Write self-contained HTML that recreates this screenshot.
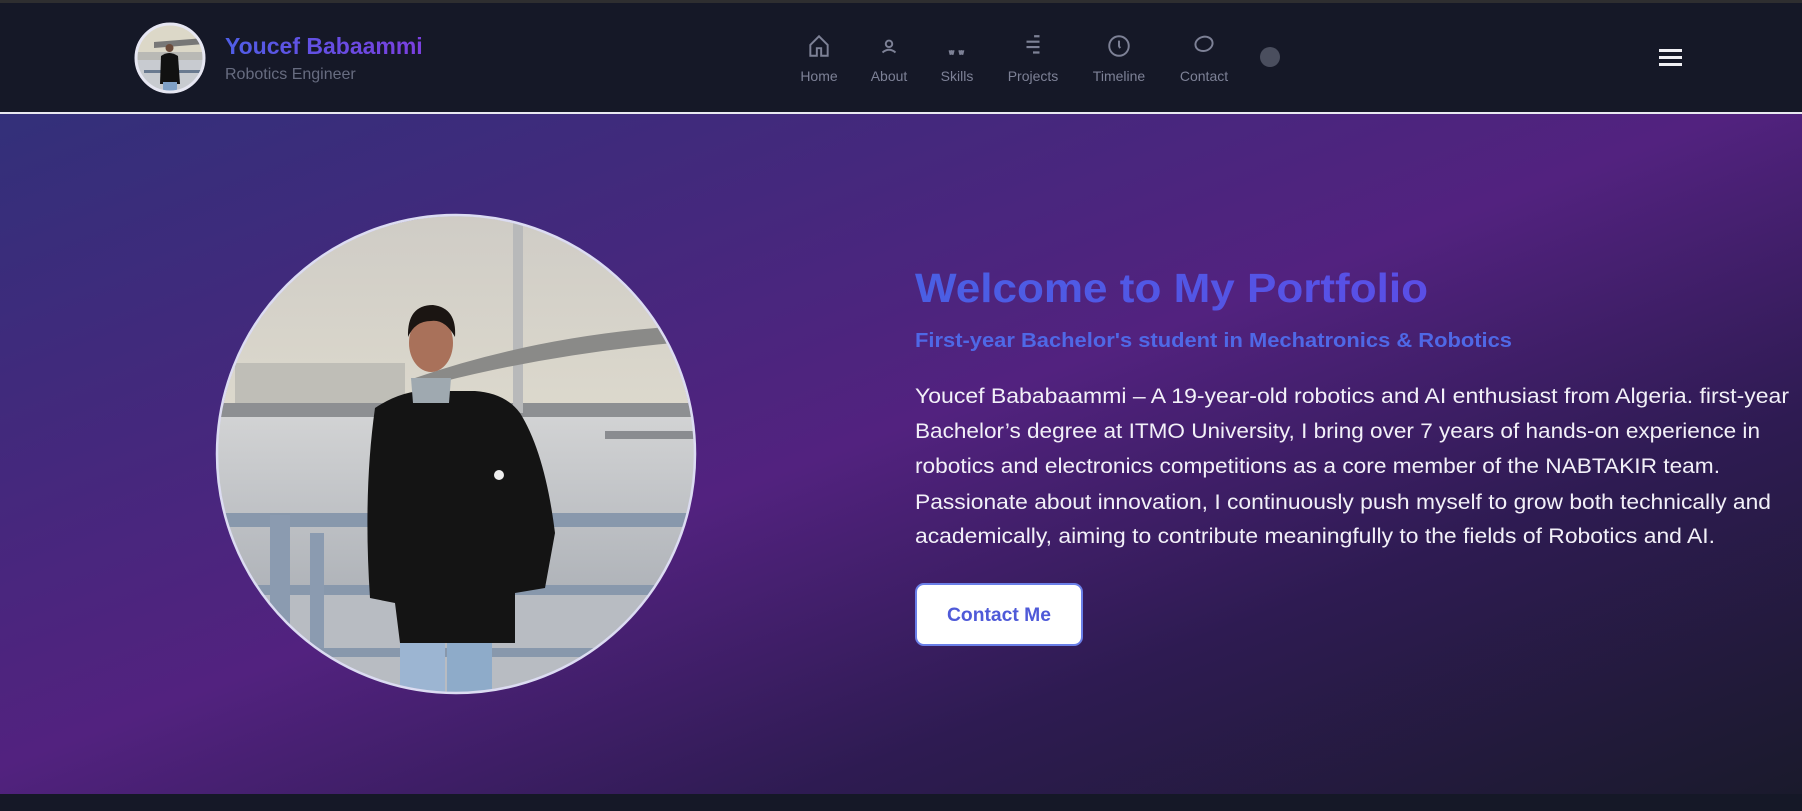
<!DOCTYPE html>
<html><head><meta charset="utf-8"><style>
*{margin:0;padding:0;box-sizing:border-box}
body{width:1802px;height:811px;overflow:hidden;background:#151827;font-family:"Liberation Sans",sans-serif;position:relative}
.top{position:absolute;left:0;top:0;width:1802px;height:3px;background:#2e2e30}
.hdr{position:absolute;left:0;top:3px;width:1802px;height:110px;background:#151827}
.line{position:absolute;left:0;top:112px;width:1802px;height:2px;background:#e8e8f0}
.hero{position:absolute;left:0;top:114px;width:1802px;height:680px;background:linear-gradient(to bottom right,#33307a 0%,#52227f 48%,#2e1b52 72%,#1a1a2c 100%)}
.nav{position:absolute;top:33px;width:70px;text-align:center;color:#7d8196;font-size:14px}
.nav svg{display:block;margin:0 auto 9px}
</style></head><body>
<div class="top"></div>
<div class="hdr"></div>
<div class="line"></div>
<!-- avatar -->
<svg style="position:absolute;left:134px;top:22px" width="72" height="72" viewBox="0 0 72 72">
<defs><clipPath id="a"><circle cx="36" cy="36" r="33"/></clipPath></defs>
<g clip-path="url(#a)">
<rect width="72" height="72" fill="#b9b9b5"/>
<rect width="72" height="30" fill="#dcd8c8"/>
<rect y="38" width="72" height="34" fill="#c8cbd0"/>
<path d="M20 20 L70 16 L70 22 L20 26Z" fill="#777"/>
<rect x="10" y="48" width="60" height="3" fill="#6a7a90"/>
<path d="M27 34 Q35 28 44 34 L46 62 L26 62Z" fill="#111"/>
<circle cx="35.5" cy="26" r="4" fill="#6b4a3a"/>
<rect x="29" y="60" width="14" height="12" fill="#7fa0c6"/>
</g>
<circle cx="36" cy="36" r="34" fill="none" stroke="#e6e6f2" stroke-width="3"/>
</svg>
<div style="position:absolute;left:225px;top:33px;font-size:23px;font-weight:bold;color:#5b55e6;background:linear-gradient(90deg,#4f5ee6,#7b3fe0);-webkit-background-clip:text;background-clip:text;-webkit-text-fill-color:transparent">Youcef Babaammi</div>
<div style="position:absolute;left:225px;top:66px;font-size:16px;color:#676c80">Robotics Engineer</div>
<!-- nav -->
<div class="nav" style="left:784px"><svg width="26" height="26" viewBox="0 0 24 24" fill="none" stroke="#7d8196" stroke-width="1.8"><path d="M4 11 L12 3 L20 11 V21 H14 V14 H10 V21 H4Z"/></svg>Home</div>
<div class="nav" style="left:854px"><svg width="26" height="26" viewBox="0 0 24 24" fill="none" stroke="#7d8196" stroke-width="1.8"><circle cx="12" cy="10" r="3"/><path d="M6 18 Q12 13 18 18"/></svg>About</div>
<div class="nav" style="left:922px"><svg width="26" height="26" viewBox="0 0 24 24" fill="none" stroke="#7d8196" stroke-width="1.6"><path d="M5 16 L6 20 L7 16 L8 20 L9 16 M14 16 L15 20 L16 16 L17 20 L18 16"/></svg>Skills</div>
<div class="nav" style="left:998px"><svg width="26" height="26" viewBox="0 0 24 24" fill="none" stroke="#7d8196" stroke-width="2"><path d="M13 3 H18 M6 8 H18 M6 13 H18 M12 18 H18"/></svg>Projects</div>
<div class="nav" style="left:1084px"><svg width="26" height="26" viewBox="0 0 24 24" fill="none" stroke="#7d8196" stroke-width="1.8"><circle cx="12" cy="12" r="9"/><path d="M12 7 V12 L13 14"/></svg>Timeline</div>
<div class="nav" style="left:1169px"><svg width="26" height="26" viewBox="0 0 24 24" fill="none" stroke="#7d8196" stroke-width="1.8"><ellipse cx="12" cy="10" rx="8" ry="6.5" transform="rotate(-15 12 10)"/></svg>Contact</div>
<div style="position:absolute;left:1260px;top:47px;width:20px;height:20px;border-radius:50%;background:#4a4e5e"></div>
<div style="position:absolute;left:1659px;top:49px;width:23px;height:3px;background:#f0f0f4;box-shadow:0 7px 0 #f0f0f4,0 14px 0 #f0f0f4"></div>
<div class="hero"></div>
<!-- photo -->
<svg style="position:absolute;left:215px;top:213px" width="482" height="482" viewBox="0 0 482 482">
<defs><clipPath id="c"><circle cx="241" cy="241" r="238"/></clipPath>
<linearGradient id="sky" x1="0" y1="0" x2="0" y2="1"><stop offset="0" stop-color="#cfccc6"/><stop offset="1" stop-color="#efebd6"/></linearGradient>
<linearGradient id="w" x1="0" y1="0" x2="0" y2="1"><stop offset="0" stop-color="#d2d3d4"/><stop offset="1" stop-color="#aeb2b8"/></linearGradient></defs>
<g clip-path="url(#c)">
<rect width="482" height="482" fill="url(#sky)"/>
<rect x="20" y="150" width="170" height="50" fill="#b8b8b2" opacity=".8"/>
<rect x="0" y="190" width="482" height="14" fill="#8d8f92"/>
<rect x="0" y="204" width="482" height="180" fill="url(#w)"/>
<rect x="298" y="10" width="10" height="190" fill="#b8b9ba"/>
<path d="M200 165 Q330 120 482 112 L482 128 Q330 140 200 176Z" fill="#8a8a88"/>
<rect x="390" y="218" width="92" height="8" fill="#8a8c90"/>
<rect x="0" y="300" width="482" height="14" fill="#8898ac"/>
<rect x="0" y="372" width="482" height="10" fill="#8898ac"/>
<rect x="0" y="382" width="482" height="100" fill="#b8bcc2"/>
<rect x="55" y="302" width="20" height="180" fill="#8b9bb0"/>
<rect x="95" y="320" width="14" height="162" fill="#8b9bb0"/>
<rect x="75" y="435" width="407" height="9" fill="#8898ac"/>
<path d="M160 195 Q190 175 220 178 L260 178 Q290 180 305 200 Q330 240 340 320 L330 375 L300 380 L300 430 L185 430 L180 390 L155 385 Q148 280 160 195Z" fill="#141414"/>
<rect x="185" y="430" width="45" height="60" fill="#9cb5d2"/>
<rect x="232" y="430" width="45" height="60" fill="#8eabc9"/>
<path d="M196 165 L236 165 L234 190 L198 190Z" fill="#9fa9b0"/>
<ellipse cx="216" cy="130" rx="22" ry="29" fill="#a9715a"/>
<path d="M193 124 Q192 92 218 92 Q242 95 240 124 Q230 106 216 108 Q200 108 193 124Z" fill="#1b1512"/>
<circle cx="284" cy="262" r="5" fill="#eee"/>
</g>
<circle cx="241" cy="241" r="239" fill="none" stroke="#dcdcf2" stroke-width="2.5"/>
</svg>
<!-- hero text -->
<svg style="position:absolute;left:0;top:0" width="1802" height="811">
<defs><linearGradient id="tg" x1="0" x2="1"><stop offset="0" stop-color="#4a5fe4"/><stop offset="1" stop-color="#5a4ee6"/></linearGradient></defs>
<text x="915" y="302" textLength="513" lengthAdjust="spacingAndGlyphs" font-family="Liberation Sans" font-weight="bold" font-size="41" fill="url(#tg)">Welcome to My Portfolio</text>
<text x="915" y="347" textLength="597" lengthAdjust="spacingAndGlyphs" font-family="Liberation Sans" font-weight="bold" font-size="20" fill="#4f68e6">First-year Bachelor's student in Mechatronics &amp; Robotics</text>
<g font-family="Liberation Sans" font-size="21" fill="#f2f0f8">
<text x="915" y="403" textLength="874" lengthAdjust="spacingAndGlyphs">Youcef Bababaammi – A 19-year-old robotics and AI enthusiast from Algeria. first-year</text>
<text x="915" y="438" textLength="845" lengthAdjust="spacingAndGlyphs">Bachelor’s degree at ITMO University, I bring over 7 years of hands-on experience in</text>
<text x="915" y="473" textLength="805" lengthAdjust="spacingAndGlyphs">robotics and electronics competitions as a core member of the NABTAKIR team.</text>
<text x="915" y="509" textLength="856" lengthAdjust="spacingAndGlyphs">Passionate about innovation, I continuously push myself to grow both technically and</text>
<text x="915" y="543" textLength="800" lengthAdjust="spacingAndGlyphs">academically, aiming to contribute meaningfully to the fields of Robotics and AI.</text>
</g>
<rect x="916" y="584" width="166" height="61" rx="8" fill="#fff" stroke="#6a7fe8" stroke-width="2"/>
<text x="947" y="621" textLength="104" lengthAdjust="spacingAndGlyphs" font-family="Liberation Sans" font-weight="bold" font-size="19" fill="#4f5ad8">Contact Me</text>
</svg>
</body></html>
